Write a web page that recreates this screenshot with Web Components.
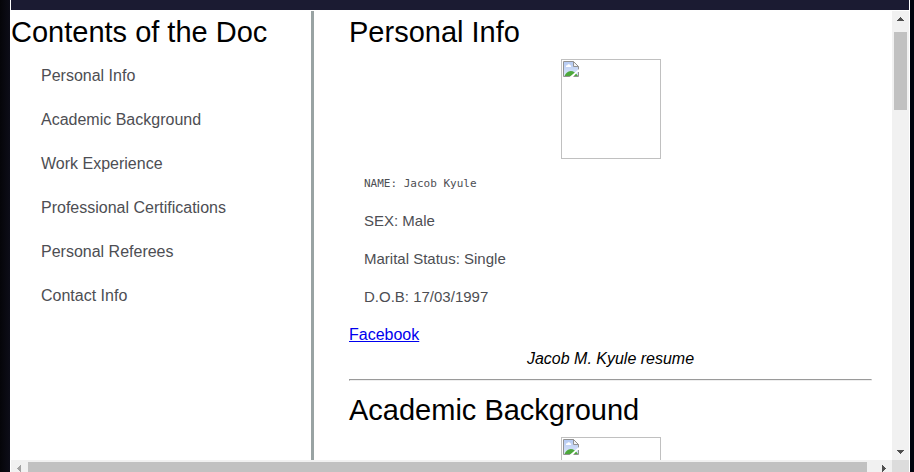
<!DOCTYPE html>
<html lang="en">
<head>
<meta charset="utf-8">
<title>Jacob Kyule resume</title>
<style>
html { height: 100%; }
body { margin: 0; height: 100%; overflow: hidden; background: linear-gradient(90deg, #050509, #0d0d18 10px, #00040e 99%); font-family: "Liberation Sans", Arial, sans-serif; color: #000; }
</style>
</head>
<body>
<resume-window>
  <contents-nav slot="nav" heading="Contents of the Doc">
    <nav-item href="#personal">Personal Info</nav-item>
    <nav-item href="#academic">Academic Background</nav-item>
    <nav-item href="#work">Work Experience</nav-item>
    <nav-item href="#certifications">Professional Certifications</nav-item>
    <nav-item href="#referees">Personal Referees</nav-item>
    <nav-item href="#contact">Contact Info</nav-item>
  </contents-nav>
  <resume-section id="personal" heading="Personal Info">
    <photo-frame slot="photo"></photo-frame>
    <info-line code>NAME: Jacob Kyule</info-line>
    <info-line>SEX: Male</info-line>
    <info-line>Marital Status: Single</info-line>
    <info-line>D.O.B: 17/03/1997</info-line>
    <profile-link slot="footer" href="#facebook" caption="Jacob M. Kyule resume">Facebook</profile-link>
  </resume-section>
  <resume-section id="academic" heading="Academic Background">
    <photo-frame slot="photo"></photo-frame>
  </resume-section>
</resume-window>
<script>
class BaseElement extends HTMLElement {
  constructor() {
    super();
    const t = document.createElement('template');
    t.innerHTML = this.constructor.markup;
    this.attachShadow({ mode: 'open' }).append(t.content.cloneNode(true));
  }
  connectedCallback() {
    const h = this.shadowRoot.querySelector('[data-heading]');
    if (h) h.textContent = this.getAttribute('heading');
    const a = this.shadowRoot.querySelector('a');
    if (a) a.href = this.getAttribute('href');
    const c = this.shadowRoot.querySelector('[data-caption]');
    if (c) c.textContent = this.getAttribute('caption');
  }
}

customElements.define('resume-window', class extends BaseElement {
  static markup = `<style>
    :host { display: flex; flex-direction: column; box-sizing: border-box; height: 100%; margin: 0 4px 0 10px; padding: 0 1px; background: #fff; overflow: hidden; }
    header { flex: none; height: 10px; background: #1b1b32; margin-bottom: 1px; }
    .view { flex: 1; min-height: 0; display: grid; grid-template-columns: 300px minmax(0, 1fr) 17px; }
    main { overflow: hidden; border-left: 3px solid #99a3a3; padding: 0 20px 0 35px; }
    .bottom { flex: none; height: 12px; display: grid; grid-template-columns: minmax(0, 1fr) 17px; overflow: hidden; }
    .corner { background: #dcdcdc; }
    ::slotted(contents-nav) { overflow: hidden; }
  </style>
  <header></header>
  <div class="view"><slot name="nav"></slot><main><slot></slot></main><scroll-bar vertical></scroll-bar></div>
  <div class="bottom"><scroll-bar></scroll-bar><div class="corner"></div></div>`;
});

customElements.define('contents-nav', class extends BaseElement {
  static markup = `<style>
    :host { display: block; }
    h1 { margin: 0; font-size: 29px; font-weight: 400; line-height: 42px; white-space: nowrap; }
    nav { display: flex; flex-direction: column; padding: 1px 0 0 30px; }
  </style><h1 data-heading></h1><nav><slot></slot></nav>`;
});

customElements.define('nav-item', class extends BaseElement {
  static markup = `<style>
    :host { display: block; }
    a { display: block; color: #4d4e53; text-decoration: none; font-size: 16px; line-height: 44px; }
  </style><a><slot></slot></a>`;
});

customElements.define('resume-section', class extends BaseElement {
  static markup = `<style>
    :host { display: block; }
    h2 { margin: 0; font-size: 29px; font-weight: 400; line-height: 42px; white-space: nowrap; }
    .photo { display: flex; justify-content: center; padding: 6px 0; }
    .info { padding-left: 15px; }
    hr { margin: 8px 0; }
  </style><h2 data-heading></h2><div class="photo"><slot name="photo"></slot></div>
  <div class="info"><slot></slot></div><slot name="footer"></slot><hr>`;
});

customElements.define('photo-frame', class extends BaseElement {
  static markup = `<style>
    :host { display: block; box-sizing: border-box; width: 100px; height: 100px; border: 1px solid #c0c0c0; padding: 1px; }
    svg { display: block; }
  </style><svg width="16" height="16" viewBox="0 0 16 16" role="img" aria-label="Photo">
    <defs><linearGradient id="sky" x2="0" y2="1"><stop stop-color="#b5caf2"/><stop offset="1" stop-color="#dce6fa"/></linearGradient></defs>
    <path d="M.5.5h10l5 5v10H.5z" fill="#fff" stroke="#929292"/>
    <path d="M1 1h10v5h4v9H1z" fill="url(#sky)"/>
    <path d="M3 6V4.6h1.2C4.4 3 6.8 2.8 7.2 4.2 8.2 4.2 8.4 5 8 6z" fill="#fff"/>
    <path d="M1.5 15c1.2-2.6 3.4-5 6.2-5 2.8 0 5.4 2 7.3 5z" fill="#4da83b"/>
    <path d="M10.5.5v5h5z" fill="#f4f4f4" stroke="#929292"/>
    <path d="M16 8v3h-1.5L10 16H6.5z" fill="#fff"/>
  </svg>`;
});

customElements.define('info-line', class extends BaseElement {
  static markup = `<style>
    :host { display: block; color: #4d4e53; font-size: 15px; line-height: 38px; }
    :host([code]) { font-family: "DejaVu Sans Mono", monospace; font-size: 11px; line-height: 37px; }
  </style><slot></slot>`;
});

customElements.define('profile-link', class extends BaseElement {
  static markup = `<style>
    :host { display: block; font-size: 16px; line-height: 24px; padding-top: 7px; }
    a { color: #0000ee; }
    p { margin: 0; text-align: center; font-style: italic; }
  </style><a><slot></slot></a><p data-caption></p>`;
});

customElements.define('scroll-bar', class extends BaseElement {
  static markup = `<style>
    :host { display: grid; height: 17px; grid-template-columns: 17px minmax(0, 1fr) 25px; background: #f1f1f1; }
    :host([vertical]) { height: auto; grid-template-columns: 17px; grid-template-rows: 21px minmax(0, 1fr) 17px; }
    button { display: flex; align-items: center; justify-content: center; border: 0; padding: 0; background: none; width: 17px; height: 17px; }
    svg { display: block; width: 7px; height: 7px; fill: #505050; }
    .thumb { background: #c1c1c1; margin: 2px 0; }
    :host([vertical]) .thumb { height: 78px; margin: 0 2px; }
    :host(:not([vertical])) .back svg { fill: #a3a3a3; }
    :host(:not([vertical])) .forward { justify-self: end; }
    :host([vertical]) svg { transform: rotate(90deg); }
  </style>
  <button class="back" aria-label="Scroll back"><svg viewBox="0 0 7 7" shape-rendering="crispEdges"><path d="M5 0v7L1 3.5z"/></svg></button>
  <div class="thumb"></div>
  <button class="forward" aria-label="Scroll forward"><svg viewBox="0 0 7 7" shape-rendering="crispEdges"><path d="M2 0v7l4-3.5z"/></svg></button>`;
});
</script>
</body>
</html>
